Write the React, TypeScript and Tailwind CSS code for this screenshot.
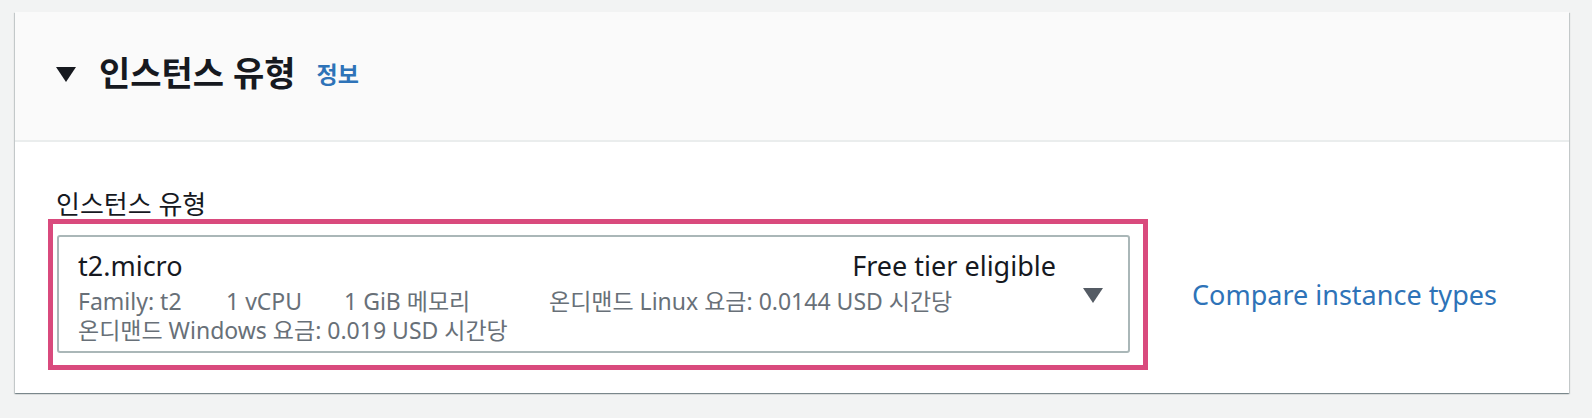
import React from "react";

const FONT = '"Noto Sans", "Noto Sans CJK KR", sans-serif';

export default function App() {
  return (
    <div
      className="min-h-[418px] w-full bg-[#f2f3f3] pt-[12px] pl-[15px]"
      style={{ fontFamily: FONT }}
    >
      <div className="w-[1554px] bg-white shadow-[0_1px_1px_0_rgba(0,28,36,0.3),1px_1px_1px_0_rgba(0,28,36,0.15),-1px_1px_1px_0_rgba(0,28,36,0.15)]">
        {/* Header */}
        <div className="flex h-[130px] items-center border-b-2 border-[#eaeded] bg-[#fafafa] pl-[41px]">
          <svg width="20" height="15" viewBox="0 0 20 15" className="mt-[-4px]">
            <polygon points="0,0 20,0 10,15" fill="#16191f" />
          </svg>
          <h2 className="ml-[23px] mt-[-6px] text-[34px] font-bold leading-[40px] text-[#16191f]">
            인스턴스 유형
          </h2>
          <a className="ml-[21px] mt-[-3px] text-[23px] font-bold text-[#2e73b8]">정보</a>
        </div>

        {/* Body */}
        <div className="pl-[33px] pt-[47px] pb-[23px]">
          <div className="pl-[8px] text-[26px] leading-[30px] text-[#16191f]">인스턴스 유형</div>
          <div className="flex items-center">
            <div className="w-[1100px] border-[5px] border-[#d94a7d] pt-[11px] pl-[4px] pr-[13px] pb-[12px]">
              <div className="flex h-[118px] items-center rounded-[3px] border-2 border-[#aab7b8] bg-white pl-[19px] pr-[25px]">
                <div className="flex-1 self-start pt-[11px]">
                  <div className="flex items-center justify-between text-[27px] leading-[36px] text-[#16191f]">
                    <span>t2.micro</span>
                    <span>Free tier eligible</span>
                  </div>
                  <div className="mt-[3px] flex text-[23px] leading-[29px] text-[#687078]">
                    <span className="w-[148px] shrink-0">Family: t2</span>
                    <span className="w-[118px] shrink-0">1 vCPU</span>
                    <span className="w-[205px] shrink-0">1 GiB 메모리</span>
                    <span>온디맨드 Linux 요금: 0.0144 USD 시간당</span>
                  </div>
                  <div className="text-[23px] leading-[29px] text-[#687078]">
                    온디맨드 Windows 요금: 0.019 USD 시간당
                  </div>
                </div>
                <svg width="20" height="15" viewBox="0 0 20 15" className="ml-[27px] mt-[2px]">
                  <polygon points="0,0 20,0 10,15" fill="#545b64" />
                </svg>
              </div>
            </div>
            <a className="ml-[44px] text-[27px] leading-[34px] text-[#2e73b8]">Compare instance types</a>
          </div>
        </div>
      </div>
    </div>
  );
}
